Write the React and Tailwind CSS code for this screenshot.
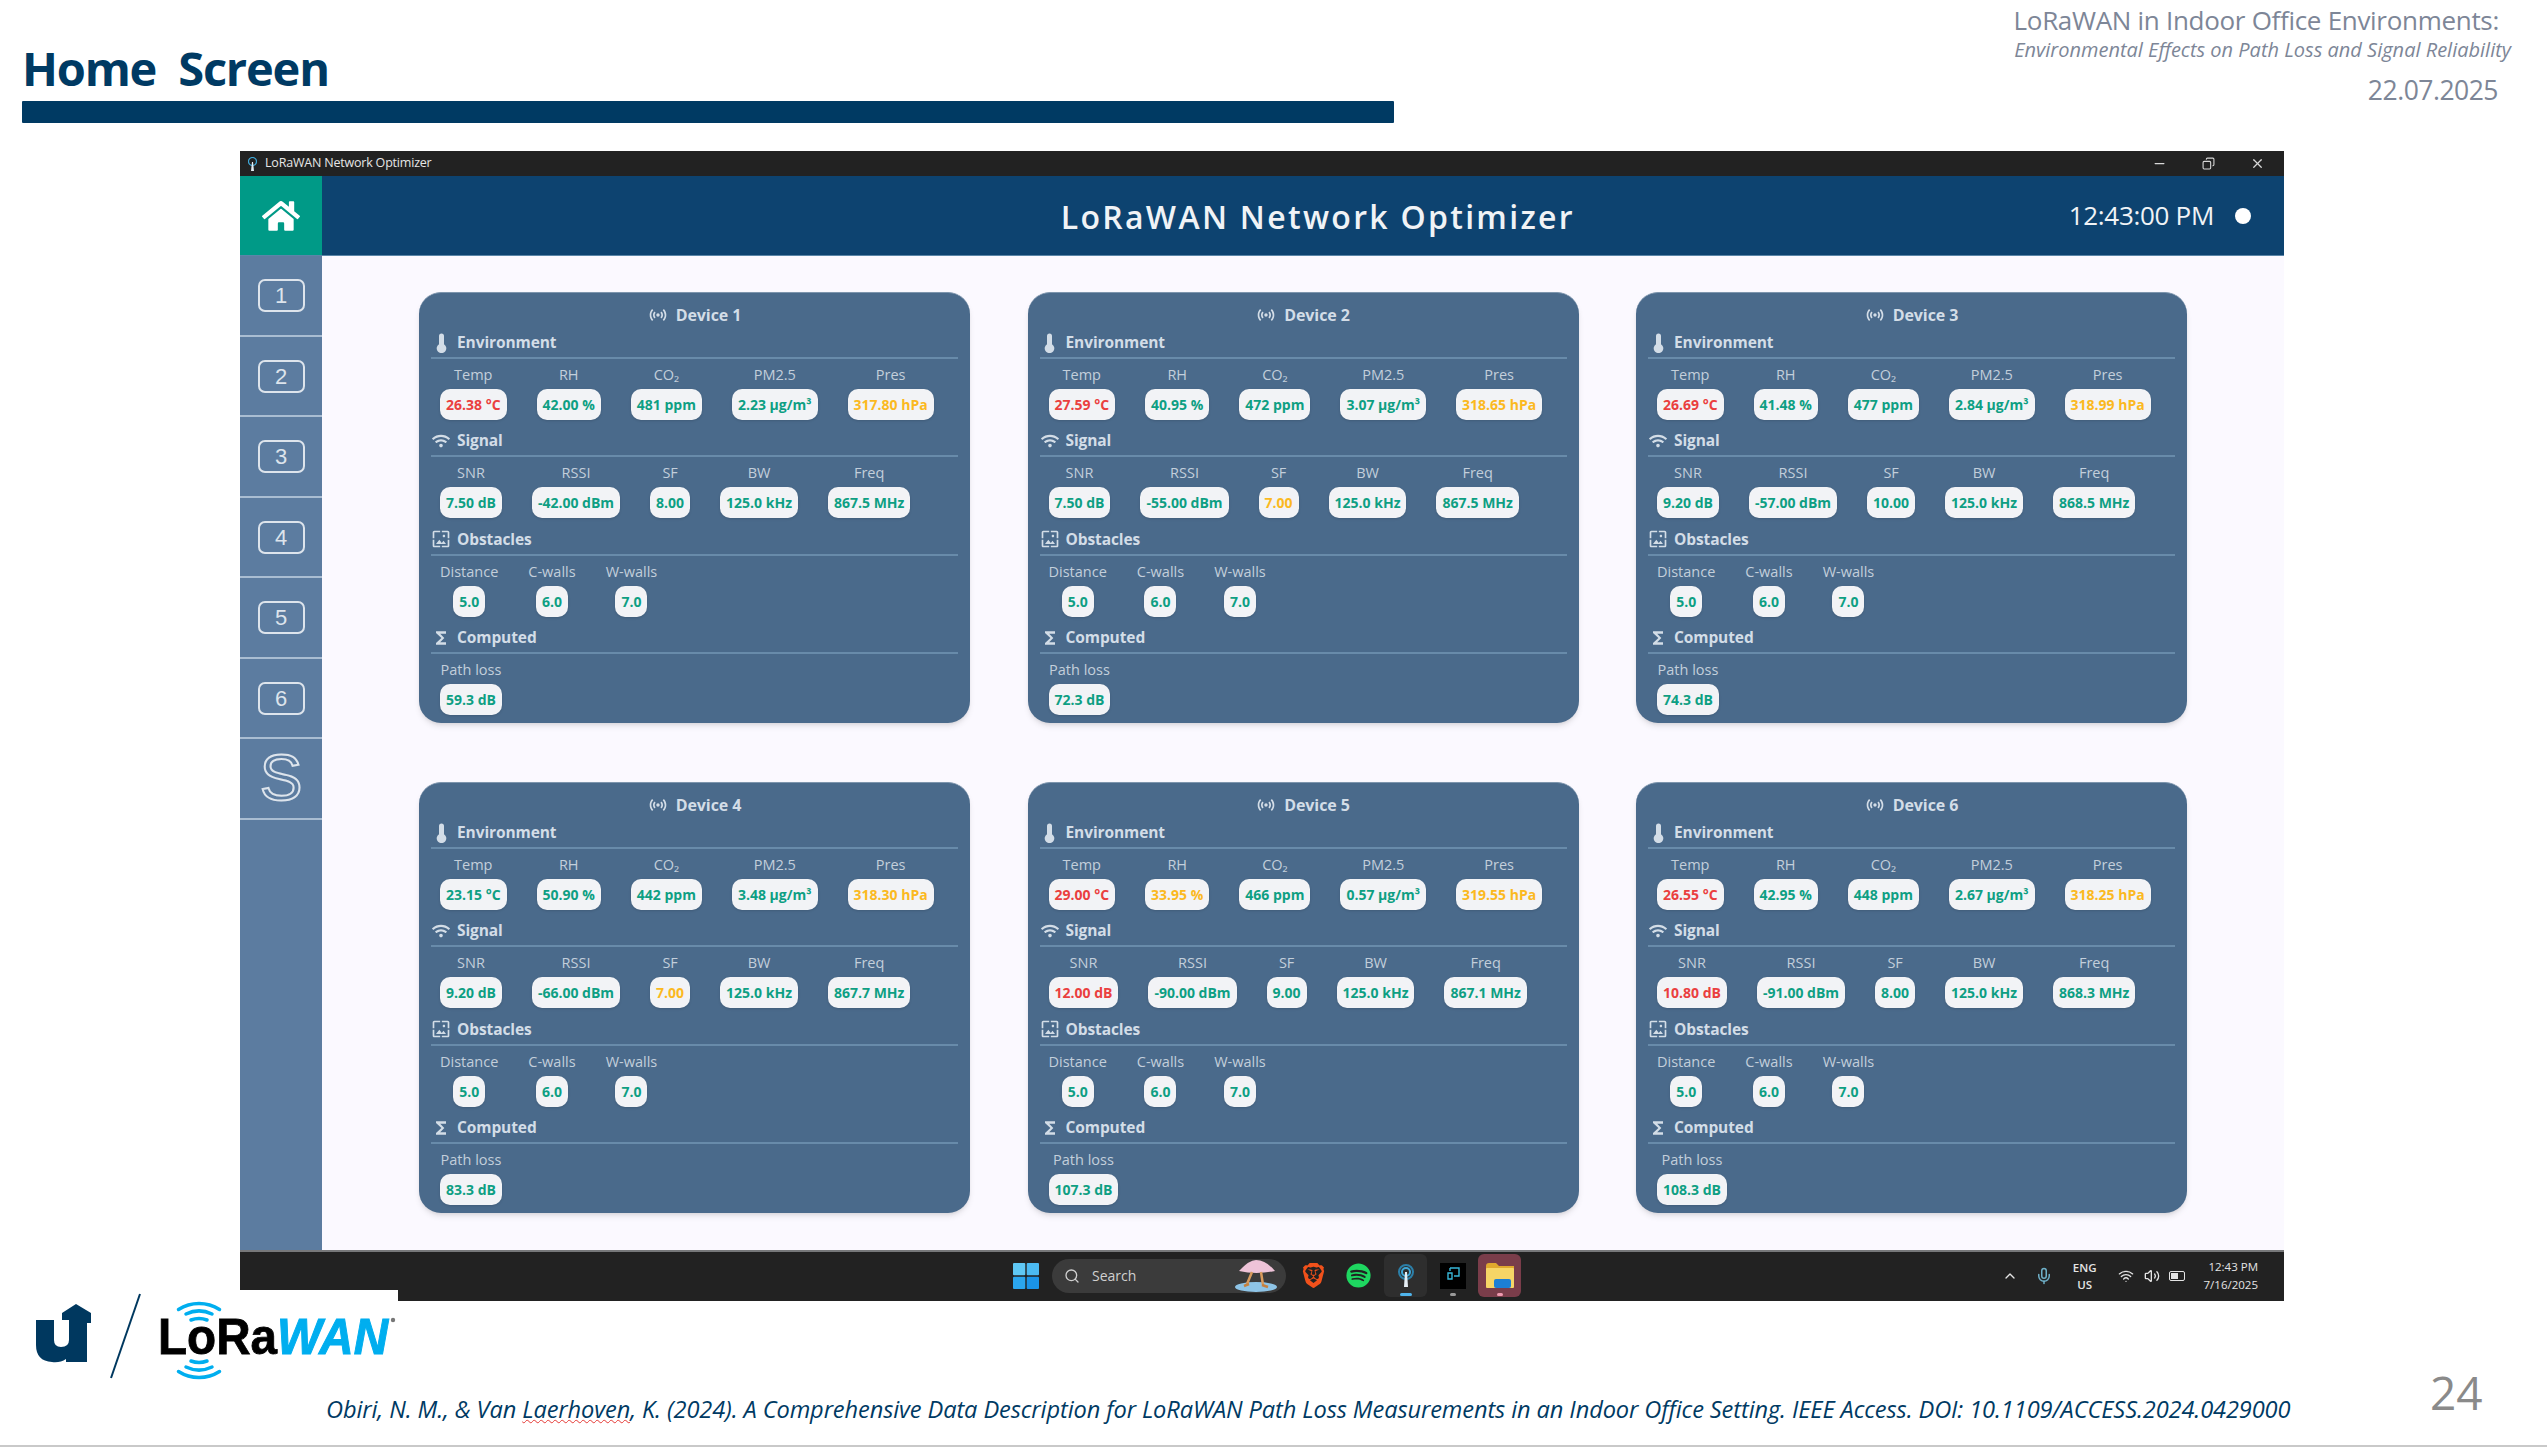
import React from "react";
import { ChevronUp, Copy, Mic, Minus, Search, Volume2, Wifi, X } from "lucide-react";
import { FaHome, FaSpotify, FaWifi } from "react-icons/fa";
import { SiBrave } from "react-icons/si";
import { MdFunctions, MdSensors, MdWallpaper } from "react-icons/md";

const G = "text-[#0e9f83]";
const R = "text-[#ea3f3f]";
const Y = "text-[#fbb91f]";

// [value, colour]
const devices = [
  {
    id: 1,
    env: [["26.38 °C", R], ["42.00 %", G], ["481 ppm", G], ["2.23 µg/m³", G], ["317.80 hPa", Y]],
    sig: [["7.50 dB", G], ["-42.00 dBm", G], ["8.00", G], ["125.0 kHz", G], ["867.5 MHz", G]],
    loss: "59.3 dB",
  },
  {
    id: 2,
    env: [["27.59 °C", R], ["40.95 %", G], ["472 ppm", G], ["3.07 µg/m³", G], ["318.65 hPa", Y]],
    sig: [["7.50 dB", G], ["-55.00 dBm", G], ["7.00", Y], ["125.0 kHz", G], ["867.5 MHz", G]],
    loss: "72.3 dB",
  },
  {
    id: 3,
    env: [["26.69 °C", R], ["41.48 %", G], ["477 ppm", G], ["2.84 µg/m³", G], ["318.99 hPa", Y]],
    sig: [["9.20 dB", G], ["-57.00 dBm", G], ["10.00", G], ["125.0 kHz", G], ["868.5 MHz", G]],
    loss: "74.3 dB",
  },
  {
    id: 4,
    env: [["23.15 °C", G], ["50.90 %", G], ["442 ppm", G], ["3.48 µg/m³", G], ["318.30 hPa", Y]],
    sig: [["9.20 dB", G], ["-66.00 dBm", G], ["7.00", Y], ["125.0 kHz", G], ["867.7 MHz", G]],
    loss: "83.3 dB",
  },
  {
    id: 5,
    env: [["29.00 °C", R], ["33.95 %", Y], ["466 ppm", G], ["0.57 µg/m³", G], ["319.55 hPa", Y]],
    sig: [["12.00 dB", R], ["-90.00 dBm", G], ["9.00", G], ["125.0 kHz", G], ["867.1 MHz", G]],
    loss: "107.3 dB",
  },
  {
    id: 6,
    env: [["26.55 °C", R], ["42.95 %", G], ["448 ppm", G], ["2.67 µg/m³", G], ["318.25 hPa", Y]],
    sig: [["10.80 dB", R], ["-91.00 dBm", G], ["8.00", G], ["125.0 kHz", G], ["868.3 MHz", G]],
    loss: "108.3 dB",
  },
];

const Thermometer = ({ size }) => (
  <svg width={size * 0.55} height={size} viewBox="0 0 11 20" fill="currentColor">
    <path d="M3 3a2.5 2.5 0 0 1 5 0V11.2a4.8 4.8 0 1 1 -5 0Z" />
  </svg>
);

const Metric = ({ label, value, color = G }) => (
  <div className="flex flex-col items-center">
    <div className="h-[30px] pt-[2px] flex items-center text-[14.5px] leading-none text-[#c3cfdb] whitespace-nowrap">{label}</div>
    <div className={`h-[31px] px-[6px] flex items-center rounded-[10px] bg-[#f2f3f6] text-[14px] font-bold whitespace-nowrap shadow-sm ${color}`}>
      {value}
    </div>
  </div>
);

const Section = ({ icon: Icon, size = 20, title, children }) => (
  <div className="h-[98.4px]">
    <div className="h-[32px] pt-[1px] flex items-center border-b-2 border-[#688baa] text-[#d3dde7]">
      <div className="w-[26px] flex justify-center pr-[6px]">
        <Icon size={size} />
      </div>
      <span className="text-[15.5px] font-bold tracking-[-0.1px]">{title}</span>
    </div>
    <div className="flex gap-[30px] px-[9px]">{children}</div>
  </div>
);

const envLabels = ["Temp", "RH", "CO₂", "PM2.5", "Pres"];
const sigLabels = ["SNR", "RSSI", "SF", "BW", "Freq"];

const DeviceCard = ({ device }) => (
  <div className="rounded-[22px] bg-[#4a6a8b] px-[12px] pt-[10px] shadow-md border-t border-[#7d95ad]">
    <div className="h-[24px] flex items-center justify-center gap-[8px] text-[#d3dde7]">
      <MdSensors size={20} />
      <span className="text-[16px] font-bold tracking-[-0.1px]">Device {device.id}</span>
    </div>
    <Section icon={Thermometer} size={20} title="Environment">
      {device.env.map(([v, c], i) => (
        <Metric key={envLabels[i]} label={envLabels[i]} value={v} color={c} />
      ))}
    </Section>
    <Section icon={FaWifi} size={18} title="Signal">
      {device.sig.map(([v, c], i) => (
        <Metric key={sigLabels[i]} label={sigLabels[i]} value={v} color={c} />
      ))}
    </Section>
    <Section icon={MdWallpaper} size={20} title="Obstacles">
      <Metric label="Distance" value="5.0" />
      <Metric label="C-walls" value="6.0" />
      <Metric label="W-walls" value="7.0" />
    </Section>
    <Section icon={MdFunctions} size={22} title="Computed">
      <Metric label="Path loss" value={device.loss} />
    </Section>
  </div>
);

const LoRaLogo = () => (
  <svg width="398" height="100" viewBox="0 0 398 100">
    <path
      d="M36 30H54V50Q54 57 61 57Q69 57 69 50V30H62V23L76 14L91 23V33H87V72H66V69Q60 73 52 72Q36 71 36 55Z"
      fill="#00385f"
    />
    <line x1="140" y1="4" x2="111" y2="88" stroke="#00385f" strokeWidth="2" />
    <g fill="none" stroke="#00aeef" strokeWidth="3.5" strokeLinecap="round">
      <path d="M178.5 19.5A38 38 0 0 1 219.5 19.5" />
      <path d="M186 24A30 30 0 0 1 212 24" />
      <path d="M191 30A23 23 0 0 1 207 30" />
      <path d="M178.5 81.5A38 38 0 0 0 219.5 81.5" />
      <path d="M186 77A30 30 0 0 0 212 77" />
      <path d="M191 71A23 23 0 0 0 207 71" />
    </g>
    <text x="158" y="64" fontFamily="Liberation Sans" fontWeight="700" fontSize="50" textLength="119" lengthAdjust="spacingAndGlyphs" fill="#000" stroke="#000" strokeWidth="0.8">
      LoRa
    </text>
    <text x="277" y="64" fontFamily="Liberation Sans" fontWeight="700" fontStyle="italic" fontSize="50" textLength="111" lengthAdjust="spacingAndGlyphs" fill="#00aeef" stroke="#00aeef" strokeWidth="1">
      WAN
    </text>
    <circle cx="393" cy="30" r="2.2" fill="#777" />
  </svg>
);

const WinLogo = () => (
  <svg width="26" height="26" viewBox="0 0 26 26">
    <rect x="0" y="0" width="12.3" height="12.3" rx="1" fill="#5fc8f5" />
    <rect x="13.7" y="0" width="12.3" height="12.3" rx="1" fill="#4bbaf2" />
    <rect x="0" y="13.7" width="12.3" height="12.3" rx="1" fill="#2ba6ee" />
    <rect x="13.7" y="13.7" width="12.3" height="12.3" rx="1" fill="#1a94e8" />
  </svg>
);

const Dancer = () => (
  <svg width="44" height="34" viewBox="0 0 44 34">
    <ellipse cx="22" cy="28" rx="21" ry="5" fill="#8ec4e6" />
    <path d="M5 12Q15 1 22 1Q32 1 41 12Q22 16 5 12Z" fill="#eec3d8" />
    <path d="M18 13L13 25M27 13L29 26" stroke="#d89a5c" strokeWidth="2.5" />
    <path d="M10 27L15 25M28 26L34 28" stroke="#c4803f" strokeWidth="2.5" />
  </svg>
);

const Antenna = () => (
  <svg width="16" height="24" viewBox="0 0 16 24" fill="none">
    <circle cx="8" cy="8" r="7" stroke="#2c7fa8" strokeWidth="2" />
    <circle cx="8" cy="8" r="4" stroke="#3fa8d8" strokeWidth="2" />
    <path d="M7 8H9L10 23H6Z" fill="#e6eef4" />
  </svg>
);

const AppIcon = () => (
  <div className="w-[26px] h-[26px] bg-black flex items-start justify-center pt-[4px]">
    <svg width="15" height="14" viewBox="0 0 15 14" fill="none" stroke="#37b7d8" strokeWidth="1.4">
      <path d="M4 1H13V9H8M4 1V4M2 6H6V12H2Z" />
    </svg>
  </div>
);

const Folder = () => (
  <svg width="28" height="25" viewBox="0 0 28 25">
    <path d="M0 3Q0 0 3 0H10L13 3H28V6H0Z" fill="#e0a92e" />
    <rect x="0" y="5" width="28" height="20" rx="1" fill="#f6d566" />
    <rect x="8" y="16" width="17" height="9" rx="2" fill="#1c7fd4" />
  </svg>
);

export default function App() {
  return (
    <div className="relative w-[2547px] h-[1447px] overflow-hidden bg-white font-['Open_Sans',sans-serif] border-b-2 border-[#c9c9c9]">
      {/* slide header */}
      <div className="h-[151px] flex justify-between">
        <div className="w-[1394px] pl-[22px] pt-[41px]">
          <div className="h-[54px] flex items-center text-[47px] font-bold text-[#003a63] whitespace-pre tracking-[-1.2px]">
            Home  Screen
          </div>
          <div className="h-[22px] mt-[6px] rounded-[1px] bg-[#003a63]" />
        </div>
        <div className="pr-[36px] pt-[5px] flex flex-col items-end text-[#7d8697]">
          <div className="mr-[12px] h-[30px] flex items-center text-[26px] tracking-[-0.3px] whitespace-nowrap">LoRaWAN in Indoor Office Environments:</div>
          <div className="h-[30px] flex items-center text-[20px] italic whitespace-nowrap">Environmental Effects on Path Loss and Signal Reliability</div>
          <div className="mr-[13px] mt-[11px] h-[30px] flex items-center text-[26.5px] tracking-[-0.5px]">22.07.2025</div>
        </div>
      </div>

      {/* app window */}
      <div className="ml-[240px] w-[2044px] h-[1150px] flex flex-col">
        <div className="h-[25px] bg-[#222222] flex items-center text-[#e6e6e6]">
          <div className="w-[25px] flex justify-center">
            <svg width="9" height="14" viewBox="0 0 9 14">
              <circle cx="4.5" cy="4.5" r="4" fill="none" stroke="#3fa8d8" strokeWidth="1.2" />
              <path d="M4 5H5L6 14H3Z" fill="#e6eef4" />
            </svg>
          </div>
          <span className="text-[12.5px] tracking-[-0.2px]">LoRaWAN Network Optimizer</span>
          <div className="ml-auto flex items-center gap-[35px] pr-[19px] text-[#d8d8d8]">
            <Minus size={15} />
            <Copy size={13} className="-scale-x-100" />
            <X size={15} />
          </div>
        </div>

        <div className="h-[80px] flex items-stretch bg-[#0d4370] border-b border-[#5a86a8]">
          <div className="w-[82px] bg-[#009a87] flex items-center justify-center text-white">
            <FaHome size={38} />
          </div>
          <div className="flex-1 flex items-center justify-center pl-[245px] pt-[2px] text-[32px] font-semibold tracking-[2.3px] text-[#f0f3f6]">
            LoRaWAN Network Optimizer
          </div>
          <div className="flex items-center gap-[21px] pr-[33px] text-[#f0f3f6]">
            <span className="text-[26px] tracking-[-0.3px]">12:43:00 PM</span>
            <span className="w-[16px] h-[16px] rounded-full bg-white" />
          </div>
        </div>

        <div className="flex-1 flex min-h-0">
          <div className="w-[82px] bg-[#5c7ca0] flex flex-col">
            {["1", "2", "3", "4", "5", "6"].map((n) => (
              <div key={n} className="h-[80.5px] pt-[1px] flex items-center justify-center border-b-2 border-[#a9bdd2]">
                <div className="w-[47px] h-[33px] rounded-[7px] border-2 border-[#dde4ec] flex items-center justify-center text-[22px] text-[#dde4ec] font-['Liberation_Sans',sans-serif]">
                  {n}
                </div>
              </div>
            ))}
            <div className="h-[80.5px] flex items-center justify-center border-b-2 border-[#a9bdd2] text-[64px] leading-none text-transparent font-['Liberation_Sans',sans-serif] [-webkit-text-stroke:2px_#dde4ec]">
              S
            </div>
          </div>
          <div className="flex-1 bg-[#fbf9ff] pl-[97px] pt-[36px]">
            <div className="grid grid-cols-[551px_551px_551px] gap-x-[57.5px] gap-y-[59px] auto-rows-[431px]">
              {devices.map((d) => (
                <DeviceCard key={d.id} device={d} />
              ))}
            </div>
          </div>
        </div>

        {/* taskbar */}
        <div className="h-[51px] pb-[2px] bg-[#222222] border-t-2 border-[#77787a] flex items-center text-[#e4e4e4]">
          <div className="ml-[773px]">
            <WinLogo />
          </div>
          <div className="ml-[13px] w-[234px] h-[34px] rounded-full bg-[#3b3b3b] flex items-center pl-[12px] pr-[8px] text-[#d0d0d0]">
            <Search size={16} />
            <span className="ml-[12px] text-[14px]">Search</span>
            <div className="ml-auto">
              <Dancer />
            </div>
          </div>
          <div className="ml-[15px]">
            <SiBrave size={25} className="text-[#f1511b]" />
          </div>
          <div className="ml-[20px]">
            <FaSpotify size={25} className="text-[#1ed760]" />
          </div>
          <div className="relative ml-[13px] w-[43px] h-[43px] rounded-[6px] bg-[#2e2e2e] flex items-center justify-center">
            <Antenna />
            <span className="absolute bottom-[1px] w-[12px] h-[3px] rounded-full bg-[#4fb3ea]" />
          </div>
          <div className="relative ml-[13px] w-[26px] h-[43px] flex items-center justify-center">
            <AppIcon />
            <span className="absolute bottom-[1px] w-[6px] h-[3px] rounded-full bg-[#9a9a9a]" />
          </div>
          <div className="relative ml-[12px] w-[43px] h-[43px] rounded-[6px] bg-[#7a3d4a] flex items-center justify-center">
            <Folder />
            <span className="absolute bottom-[1px] w-[6px] h-[3px] rounded-full bg-[#f09ab0]" />
          </div>
          <div className="ml-auto flex items-center pr-[26px]">
            <ChevronUp size={16} />
            <Mic size={18} className="ml-[17px] text-[#6fb0c8]" />
            <div className="ml-[20px] flex flex-col items-center text-[11.5px] leading-[17px] font-semibold">
              <span>ENG</span>
              <span>US</span>
            </div>
            <Wifi size={16} className="ml-[21px]" />
            <Volume2 size={16} className="ml-[10px]" />
            <div className="ml-[9px] w-[16px] h-[10px] rounded-[2px] border border-[#e4e4e4] p-[1px]">
              <div className="w-[7px] h-full bg-[#e4e4e4]" />
            </div>
            <div className="ml-[19px] flex flex-col items-end text-[11.5px] leading-[18px]">
              <span>12:43 PM</span>
              <span>7/16/2025</span>
            </div>
          </div>
        </div>
      </div>

      {/* slide footer */}
      <div className="flex">
        <div className="w-[2400px]">
          <div className="relative -mt-[11px] w-[398px] h-[100px] bg-white">
            <LoRaLogo />
          </div>
          <div className="ml-[326px] mt-[5px] h-[30px] flex items-center text-[23.6px] italic text-[#003a63] whitespace-pre tracking-[-0.1px]">
            <span>Obiri, N. M., &amp; Van </span>
            <span className="underline decoration-wavy decoration-[#e53935] decoration-1">Laerhoven</span>
            <span>, K. (2024). A Comprehensive Data Description for LoRaWAN Path Loss Measurements in an Indoor Office Setting. IEEE Access. DOI: 10.1109/ACCESS.2024.0429000</span>
          </div>
        </div>
        <div className="pl-[30px] pt-[68px] text-[46px] leading-none text-[#8a8a8a]">24</div>
      </div>
    </div>
  );
}
